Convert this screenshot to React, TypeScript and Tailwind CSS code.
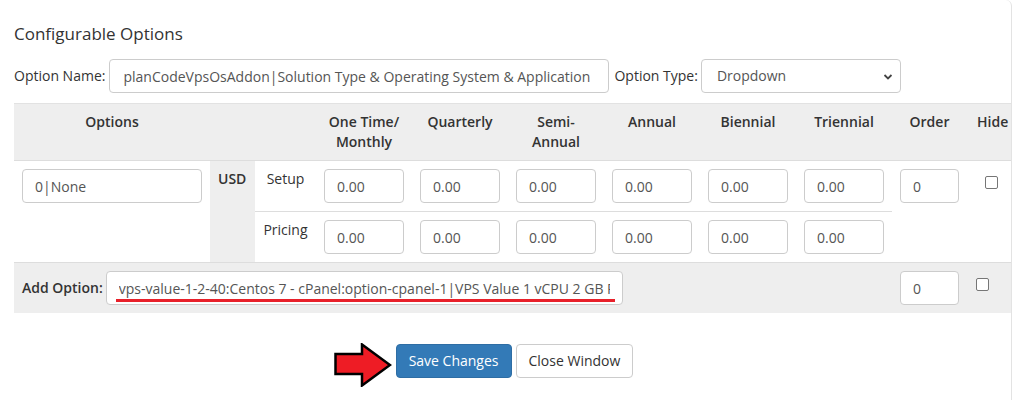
import React from 'react'

const periods: [string, string?][] = [
  ['One Time/', 'Monthly'],
  ['Quarterly'],
  ['Semi-', 'Annual'],
  ['Annual'],
  ['Biennial'],
  ['Triennial'],
]

const inputCls =
  'h-[34px] w-full rounded-[4px] border border-[#ccc] bg-white px-3 text-[14px] text-[#555] outline-none'

function PriceInput() {
  return <input readOnly value="0.00" className={inputCls} />
}

function Checkbox() {
  return <span className="inline-block h-[13px] w-[13px] rounded-[2px] border border-[#767676] bg-white" />
}

function RedArrow() {
  return (
    <svg width="58" height="44" viewBox="0 0 58 44" className="absolute left-[-62px] top-[-1px]">
      <path
        d="M1.5 11 H28 V1.5 L56 22 L28 42.5 V31 H1.5 Z"
        fill="#ee1c25"
        stroke="#000"
        strokeWidth="2.5"
      />
    </svg>
  )
}

export default function App() {
  return (
    <div className="h-[400px] w-[1012px] overflow-hidden rounded-tr-[6px] border-r border-[#e3e3e3] bg-white font-['Open_Sans',sans-serif] text-[14px] leading-[20px] text-[#333]">
      <div className="w-[1029px] px-[14px] pt-[24px]">
        <h3 className="text-[17px] leading-[20px] font-normal">Configurable Options</h3>

        <div className="mt-[15px] flex items-center">
          <span className="mr-[4px]">Option Name:</span>
          <input
            readOnly
            value="planCodeVpsOsAddon|Solution Type & Operating System & Application"
            className="h-[34px] w-[500px] rounded-[4px] border border-[#ccc] bg-white px-[13px] text-[14px] text-[#555] outline-none"
          />
          <span className="ml-[5px] mr-[3px]">Option Type:</span>
          <div className="relative flex h-[34px] w-[200px] items-center rounded-[4px] border border-[#ccc] bg-white pl-[15px] text-[#555]">
            Dropdown
            <svg width="10" height="10" viewBox="0 0 10 10" className="absolute right-[7px] top-[12px]">
              <path d="M1.5 3 L5 6.5 L8.5 3" fill="none" stroke="#444" strokeWidth="1.8" />
            </svg>
          </div>
        </div>

        <table className="mt-[10px] w-[1001px] table-fixed border-collapse">
          <colgroup>
            <col className="w-[196px]" />
            <col className="w-[45px]" />
            <col className="w-[61px]" />
            {periods.map((p) => (
              <col key={p[0]} className="w-[96px]" />
            ))}
            <col className="w-[75px]" />
            <col className="w-[48px]" />
          </colgroup>
          <thead>
            <tr className="border-t border-[#e2e2e2] bg-[#eee] align-top">
              <th className="p-2 font-semibold">Options</th>
              <th className="p-2" />
              <th className="p-2" />
              {periods.map(([a, b]) => (
                <th key={a} className="whitespace-nowrap p-2 font-semibold">
                  {a}
                  {b && (
                    <>
                      <br />
                      {b}
                    </>
                  )}
                </th>
              ))}
              <th className="p-2 font-semibold">Order</th>
              <th className="p-2 pl-[10px] text-left font-semibold">Hide</th>
            </tr>
          </thead>
          <tbody>
            <tr className="border-t border-[#ddd] align-top">
              <td rowSpan={2} className="p-2">
                <input readOnly value="0|None" className={inputCls} />
              </td>
              <td rowSpan={2} className="bg-[#eee] p-2 font-semibold">
                USD
              </td>
              <td className="p-2 text-center">Setup</td>
              {periods.map((p) => (
                <td key={p[0]} className="p-2">
                  <PriceInput />
                </td>
              ))}
              <td rowSpan={2} className="p-2">
                <input readOnly value="0" className={inputCls} />
              </td>
              <td rowSpan={2} className="p-2 pt-[13px] text-center">
                <Checkbox />
              </td>
            </tr>
            <tr className="align-top">
              <td className="border-t border-[#ddd] p-2 text-center">Pricing</td>
              {periods.map((p) => (
                <td key={p[0]} className="border-t border-[#ddd] p-2">
                  <PriceInput />
                </td>
              ))}
            </tr>
            <tr className="border-t border-[#ddd] bg-[#eee] align-top">
              <td colSpan={9} className="p-2">
                <div className="flex items-center">
                  <span className="mr-[3px] font-semibold">Add Option:</span>
                  <div className="relative">
                    <input
                      readOnly
                      value="vps-value-1-2-40:Centos 7 - cPanel:option-cpanel-1|VPS Value 1 vCPU 2 GB RAM 40 GB SSD"
                      className="h-[34px] w-[517px] rounded-[4px] border border-[#ccc] bg-white px-3 text-[14px] text-[#555] outline-none"
                    />
                    <div className="absolute left-[10px] right-[8px] top-[28px] h-[3px] bg-[#e8202a]" />
                  </div>
                </div>
              </td>
              <td className="p-2">
                <input readOnly value="0" className={inputCls} />
              </td>
              <td className="p-2 pl-[9px] pt-[13px]">
                <Checkbox />
              </td>
            </tr>
          </tbody>
        </table>

        <div className="mt-[31px] flex justify-center gap-[4px]">
          <div className="relative">
            <RedArrow />
            <button className="h-[34px] rounded-[4px] border border-[#2e6da4] bg-[#337ab7] px-3 text-white">
              Save Changes
            </button>
          </div>
          <button className="h-[34px] rounded-[4px] border border-[#ccc] bg-white px-3 text-[#333]">
            Close Window
          </button>
        </div>
      </div>
    </div>
  )
}
